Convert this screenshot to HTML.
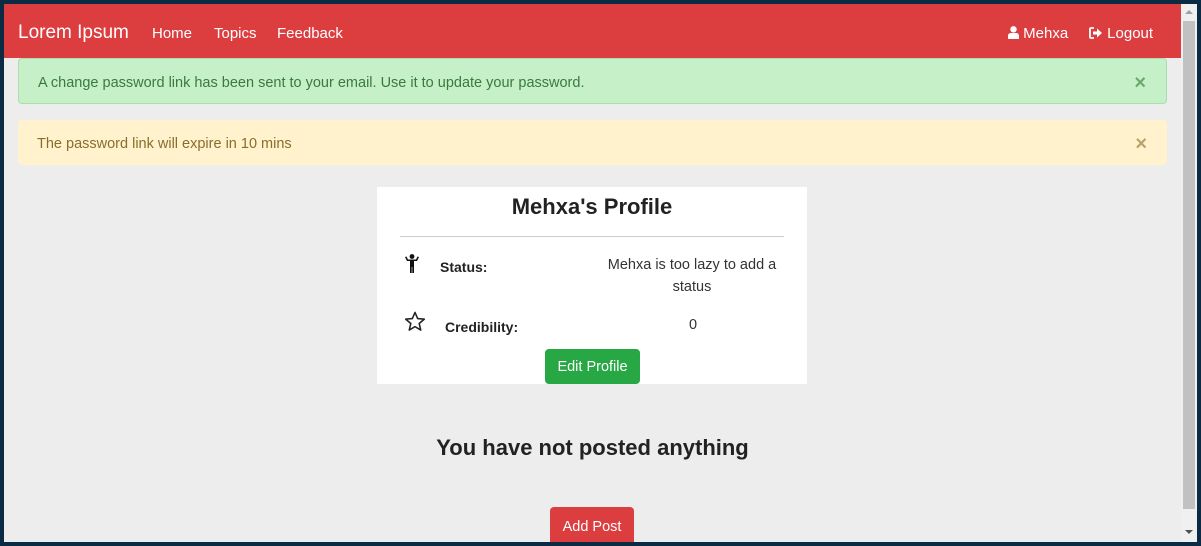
<!DOCTYPE html>
<html><head><style>
*{box-sizing:border-box;margin:0;padding:0}
body{width:1201px;height:546px;background:#0b2b45;overflow:hidden;font-family:"Liberation Sans",sans-serif;position:relative}
.vp{position:absolute;left:4px;top:4px;width:1177px;height:538px;background:#ededed;overflow:hidden}
.sb{position:absolute;left:1181px;top:4px;width:16px;height:538px;background:#f0f0f0}
.sb .th{position:absolute;left:2px;top:17px;width:12px;height:488px;background:#c1c1c1}
.nav{position:absolute;left:0;top:0;width:1177px;height:54px;background:#dc3e40;color:#fff}
.nav span{position:absolute;top:21px;font-size:15px}
.a{position:absolute;left:14px;width:1149px;border-radius:4px;font-size:14.5px;padding-left:19px}
.x{position:absolute;right:20px;font-size:20px;font-weight:bold}
.card{position:absolute;left:373px;top:183px;width:430px;height:197px;background:#fff}
</style></head><body>
<div class="vp">
 <div class="nav">
  <span style="left:14px;top:18px;font-size:19px">Lorem Ipsum</span>
  <span style="left:148px">Home</span>
  <span style="left:210px">Topics</span>
  <span style="left:273px">Feedback</span>
  <span style="left:1004px"><svg width="11" height="13" viewBox="0 0 11 13" style="vertical-align:-1px"><circle cx="5.5" cy="3.3" r="3.2" fill="#fff"/><path d="M0 13V10Q0 7 3 7H8Q11 7 11 10V13Z" fill="#fff"/></svg> Mehxa</span>
  <span style="left:1085px"><svg width="14" height="12" viewBox="0 0 14 12" style="vertical-align:-1px"><path d="M5 1H2Q1 1 1 2V10Q1 11 2 11H5" stroke="#fff" stroke-width="1.8" fill="none"/><path d="M4 4.5H8V1.5L13 6L8 10.5V7.5H4Z" fill="#fff"/></svg> Logout</span>
 </div>
 <div class="a" style="top:54px;height:46px;background:#c6f0c8;border:1px solid #a8dfad;color:#3a7a3d;line-height:48px">A change password link has been sent to your email. Use it to update your password.<span class="x" style="color:#6aab6d">×</span></div>
 <div class="a" style="top:116px;height:45px;background:#fff2cc;color:#8a6d2b;line-height:48px">The password link will expire in 10 mins<span class="x" style="color:#b8a36a">×</span></div>
 <div class="card">
  <div style="position:absolute;left:0;width:430px;top:7px;text-align:center;font-size:22px;font-weight:bold;color:#222">Mehxa's Profile</div>
  <div style="position:absolute;left:23px;top:49px;width:384px;height:1px;background:#ccc"></div>
  <svg style="position:absolute;left:27px;top:67px" width="16" height="20" viewBox="0 0 16 20"><circle cx="8" cy="2.5" r="2.4" fill="#111"/><path d="M1 3L3 7H6V19H7.7V13H8.3V19H10V7H13L15 3L13.5 2.5L12 5.5H4L2.5 2.5Z" fill="#111"/></svg>
  <div style="position:absolute;left:63px;top:72px;font-size:14px;font-weight:bold;color:#222">Status:</div>
  <div style="position:absolute;left:215px;width:200px;top:67px;text-align:center;font-size:14.5px;line-height:22px;color:#333">Mehxa is too lazy to add a status</div>
  <svg style="position:absolute;left:27px;top:124px" width="22" height="21" viewBox="0 0 24 23"><path d="M12 1.5L14.9 8.3L22.2 8.9L16.6 13.7L18.3 20.9L12 17.1L5.7 20.9L7.4 13.7L1.8 8.9L9.1 8.3Z" fill="none" stroke="#222" stroke-width="1.7" stroke-linejoin="round"/></svg>
  <div style="position:absolute;left:68px;top:132px;font-size:14px;font-weight:bold;color:#222">Credibility:</div>
  <div style="position:absolute;left:312px;top:130px;font-size:14.5px;color:#333">0</div>
  <div style="position:absolute;left:168px;top:162px;width:95px;height:35px;background:#28a745;border-radius:4px;color:#fff;font-size:14.5px;text-align:center;line-height:37px">Edit Profile</div>
 </div>
 <div style="position:absolute;left:0;width:1177px;top:431px;text-align:center;font-size:22px;font-weight:bold;color:#222">You have not posted anything</div>
 <div style="position:absolute;left:546px;top:503px;width:84px;height:38px;background:#dc3e40;border-radius:4px;color:#fff;font-size:14.5px;text-align:center;line-height:40px">Add Post</div>
</div>
<div class="sb"><div class="th"></div>
<div style="position:absolute;left:4px;top:6px;border:4px solid transparent;border-bottom:4px solid #a0a0a0;border-top:0"></div>
<div style="position:absolute;left:4px;top:526px;border:4px solid transparent;border-top:4px solid #505050;border-bottom:0"></div></div>
</body></html>
